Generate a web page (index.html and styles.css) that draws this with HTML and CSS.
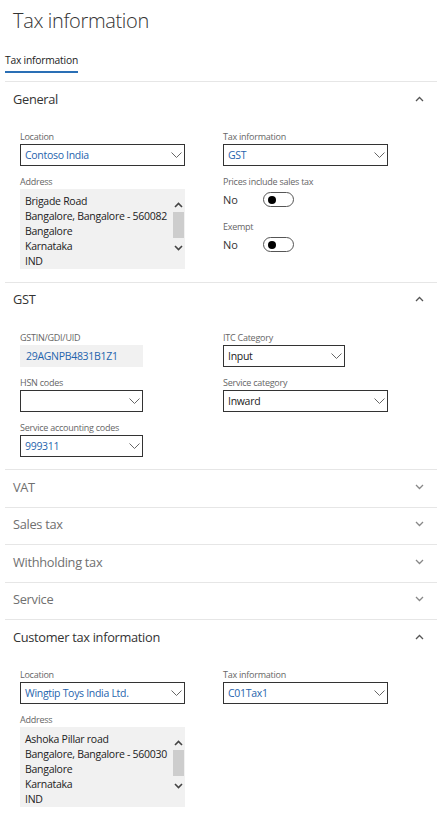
FILE: index.html
```html
<!DOCTYPE html>
<html>
<head>
<meta charset="utf-8">
<link rel="stylesheet" href="styles.css">
</head>
<body>
<div class="page">
  <h1 class="title">Tax information</h1>
  <div class="tabs"><span class="tab active">Tax information</span></div>

  <section class="ft open">
    <div class="ft-head"><span class="ft-title">General</span>
      <svg class="ft-chev" width="9" height="6" viewBox="0 0 9 6"><path d="M1 5 L4.5 1.5 L8 5" fill="none" stroke="#555" stroke-width="1.3"/></svg>
    </div>
    <div class="ft-body">
      <div class="col">
        <div class="field"><div class="lbl">Location</div>
          <div class="combo w165"><span class="val">Contoso India</span><svg class="cchev" width="11" height="6" viewBox="0 0 11 6"><path d="M0.5 0.5 L5.5 5.5 L10.5 0.5" fill="none" stroke="#666" stroke-width="1"/></svg></div>
        </div>
        <div class="field"><div class="lbl">Address</div>
          <div class="memo w165">
            <div class="memo-text">Brigade Road<br>Bangalore, Bangalore - 560082<br>Bangalore<br>Karnataka<br>IND</div>
            <div class="sbar">
              <svg class="sarrow" width="9" height="6" viewBox="0 0 9 6"><path d="M1 5 L4.5 1.5 L8 5" fill="none" stroke="#444" stroke-width="1.6"/></svg>
              <div class="thumb"></div>
              <svg class="sarrow" width="9" height="6" viewBox="0 0 9 6"><path d="M1 1 L4.5 4.5 L8 1" fill="none" stroke="#444" stroke-width="1.6"/></svg>
            </div>
          </div>
        </div>
      </div>
      <div class="col">
        <div class="field"><div class="lbl">Tax information</div>
          <div class="combo w165"><span class="val">GST</span><svg class="cchev" width="11" height="6" viewBox="0 0 11 6"><path d="M0.5 0.5 L5.5 5.5 L10.5 0.5" fill="none" stroke="#666" stroke-width="1"/></svg></div>
        </div>
        <div class="field"><div class="lbl">Prices include sales tax</div>
          <div class="tgl-row"><span class="tgl-txt">No</span><span class="toggle"><span class="dot"></span></span></div>
        </div>
        <div class="field"><div class="lbl">Exempt</div>
          <div class="tgl-row"><span class="tgl-txt">No</span><span class="toggle"><span class="dot"></span></span></div>
        </div>
      </div>
    </div>
  </section>

  <section class="ft open">
    <div class="ft-head"><span class="ft-title">GST</span>
      <svg class="ft-chev" width="9" height="6" viewBox="0 0 9 6"><path d="M1 5 L4.5 1.5 L8 5" fill="none" stroke="#555" stroke-width="1.3"/></svg>
    </div>
    <div class="ft-body">
      <div class="col">
        <div class="field"><div class="lbl">GSTIN/GDI/UID</div>
          <div class="ro w123"><span class="val">29AGNPB4831B1Z1</span></div>
        </div>
        <div class="field"><div class="lbl">HSN codes</div>
          <div class="combo w123"><span class="val"></span><svg class="cchev" width="11" height="6" viewBox="0 0 11 6"><path d="M0.5 0.5 L5.5 5.5 L10.5 0.5" fill="none" stroke="#666" stroke-width="1"/></svg></div>
        </div>
        <div class="field"><div class="lbl">Service accounting codes</div>
          <div class="combo w123"><span class="val">999311</span><svg class="cchev" width="11" height="6" viewBox="0 0 11 6"><path d="M0.5 0.5 L5.5 5.5 L10.5 0.5" fill="none" stroke="#666" stroke-width="1"/></svg></div>
        </div>
      </div>
      <div class="col">
        <div class="field"><div class="lbl">ITC Category</div>
          <div class="combo w122"><span class="val plain">Input</span><svg class="cchev" width="11" height="6" viewBox="0 0 11 6"><path d="M0.5 0.5 L5.5 5.5 L10.5 0.5" fill="none" stroke="#666" stroke-width="1"/></svg></div>
        </div>
        <div class="field"><div class="lbl">Service category</div>
          <div class="combo w165"><span class="val plain">Inward</span><svg class="cchev" width="11" height="6" viewBox="0 0 11 6"><path d="M0.5 0.5 L5.5 5.5 L10.5 0.5" fill="none" stroke="#666" stroke-width="1"/></svg></div>
        </div>
      </div>
    </div>
  </section>

  <section class="ft">
    <div class="ft-head"><span class="ft-title">VAT</span>
      <svg class="ft-chev" width="9" height="6" viewBox="0 0 9 6"><path d="M1 1 L4.5 4.5 L8 1" fill="none" stroke="#888" stroke-width="1.3"/></svg>
    </div>
  </section>
  <section class="ft">
    <div class="ft-head"><span class="ft-title">Sales tax</span>
      <svg class="ft-chev" width="9" height="6" viewBox="0 0 9 6"><path d="M1 1 L4.5 4.5 L8 1" fill="none" stroke="#888" stroke-width="1.3"/></svg>
    </div>
  </section>
  <section class="ft">
    <div class="ft-head"><span class="ft-title">Withholding tax</span>
      <svg class="ft-chev" width="9" height="6" viewBox="0 0 9 6"><path d="M1 1 L4.5 4.5 L8 1" fill="none" stroke="#888" stroke-width="1.3"/></svg>
    </div>
  </section>
  <section class="ft">
    <div class="ft-head"><span class="ft-title">Service</span>
      <svg class="ft-chev" width="9" height="6" viewBox="0 0 9 6"><path d="M1 1 L4.5 4.5 L8 1" fill="none" stroke="#888" stroke-width="1.3"/></svg>
    </div>
  </section>

  <section class="ft open">
    <div class="ft-head"><span class="ft-title">Customer tax information</span>
      <svg class="ft-chev" width="9" height="6" viewBox="0 0 9 6"><path d="M1 5 L4.5 1.5 L8 5" fill="none" stroke="#555" stroke-width="1.3"/></svg>
    </div>
    <div class="ft-body">
      <div class="col">
        <div class="field"><div class="lbl">Location</div>
          <div class="combo w165"><span class="val">Wingtip Toys India Ltd.</span><svg class="cchev" width="11" height="6" viewBox="0 0 11 6"><path d="M0.5 0.5 L5.5 5.5 L10.5 0.5" fill="none" stroke="#666" stroke-width="1"/></svg></div>
        </div>
        <div class="field"><div class="lbl">Address</div>
          <div class="memo w165">
            <div class="memo-text">Ashoka Pillar road<br>Bangalore, Bangalore - 560030<br>Bangalore<br>Karnataka<br>IND</div>
            <div class="sbar">
              <svg class="sarrow" width="9" height="6" viewBox="0 0 9 6"><path d="M1 5 L4.5 1.5 L8 5" fill="none" stroke="#444" stroke-width="1.6"/></svg>
              <div class="thumb"></div>
              <svg class="sarrow" width="9" height="6" viewBox="0 0 9 6"><path d="M1 1 L4.5 4.5 L8 1" fill="none" stroke="#444" stroke-width="1.6"/></svg>
            </div>
          </div>
        </div>
      </div>
      <div class="col">
        <div class="field"><div class="lbl">Tax information</div>
          <div class="combo w165"><span class="val">C01Tax1</span><svg class="cchev" width="11" height="6" viewBox="0 0 11 6"><path d="M0.5 0.5 L5.5 5.5 L10.5 0.5" fill="none" stroke="#666" stroke-width="1"/></svg></div>
        </div>
      </div>
    </div>
  </section>
</div>
</body>
</html>
```
FILE: styles.css
```css
html, body {
  margin: 0;
  padding: 0;
  background: #fff;
}
body {
  font-family: "Open Sans", "Noto Sans", sans-serif;
  color: #333;
  overflow: hidden;
}
.page {
  padding: 0 5px;
}
.title {
  margin: 0;
  padding: 6px 0 0 8px;
  height: 30px;
  font-size: 20px;
  font-weight: 300;
  line-height: 30px;
  letter-spacing: -0.35px;
  color: #333;
}
.tabs {
  display: flex;
  margin-top: 17px;
  margin-bottom: 8px;
}
.tab {
  font-size: 10.3px;
  line-height: 15px;
  letter-spacing: -0.22px;
  color: #222;
  padding-bottom: 3px;
  border-bottom: 2px solid #2a6fb5;
}
.ft {
  border-top: 1px solid #e6e6e6;
}
.ft-head {
  box-sizing: border-box;
  height: 36.5px;
  display: flex;
  align-items: center;
  justify-content: space-between;
  padding: 0 13px 3px 8px;
}
.ft-title {
  font-size: 12.8px;
  letter-spacing: -0.3px;
  color: #707070;
}
.ft.open .ft-title {
  color: #333;
}
.ft-body {
  display: grid;
  grid-template-columns: 203px 203px;
  padding: 12.5px 15px 12.5px 15px;
}
.col {
  display: flex;
  flex-direction: column;
  gap: 10px;
}
.lbl {
  font-size: 9px;
  line-height: 11px;
  height: 13px;
  letter-spacing: -0.25px;
  color: #666;
  white-space: nowrap;
}
.combo {
  box-sizing: border-box;
  height: 22px;
  border: 1px solid #333;
  display: flex;
  align-items: center;
  justify-content: space-between;
  padding: 0 2px 0 4px;
}
.w165 { width: 165px; }
.w123 { width: 123px; }
.w122 { width: 122px; }
.val {
  font-size: 10.5px;
  letter-spacing: -0.3px;
  color: #1f64ad;
  white-space: nowrap;
}
.val.plain {
  color: #222;
}
.cchev {
  flex: none;
}
.ro {
  box-sizing: border-box;
  height: 22px;
  background: #f1f1f1;
  display: flex;
  align-items: center;
  padding-left: 6px;
}
.memo {
  box-sizing: border-box;
  height: 80px;
  background: #f1f1f1;
  display: flex;
  overflow: hidden;
}
.memo-text {
  flex: 1;
  min-width: 0;
  overflow: hidden;
  padding: 5px 0 0 5px;
  font-size: 10.5px;
  line-height: 15px;
  letter-spacing: -0.27px;
  color: #222;
  white-space: nowrap;
}
.sbar {
  flex: none;
  width: 11px;
  margin-right: 1px;
  display: flex;
  flex-direction: column;
  align-items: center;
  padding-top: 13px;
}
.sarrow {
  flex: none;
}
.thumb {
  width: 11px;
  height: 26px;
  background: #cdcdcd;
  margin: 4px 0 7px;
}
.tgl-row {
  height: 21px;
  margin-bottom: 1px;
  display: flex;
  align-items: center;
}
.tgl-txt {
  width: 40px;
  font-size: 11px;
  color: #333;
}
.toggle {
  box-sizing: border-box;
  width: 31px;
  height: 15px;
  border: 1px solid #555;
  border-radius: 8px;
  display: flex;
  align-items: center;
  padding-left: 4px;
}
.dot {
  width: 8px;
  height: 8px;
  border-radius: 50%;
  background: #000;
}
```
